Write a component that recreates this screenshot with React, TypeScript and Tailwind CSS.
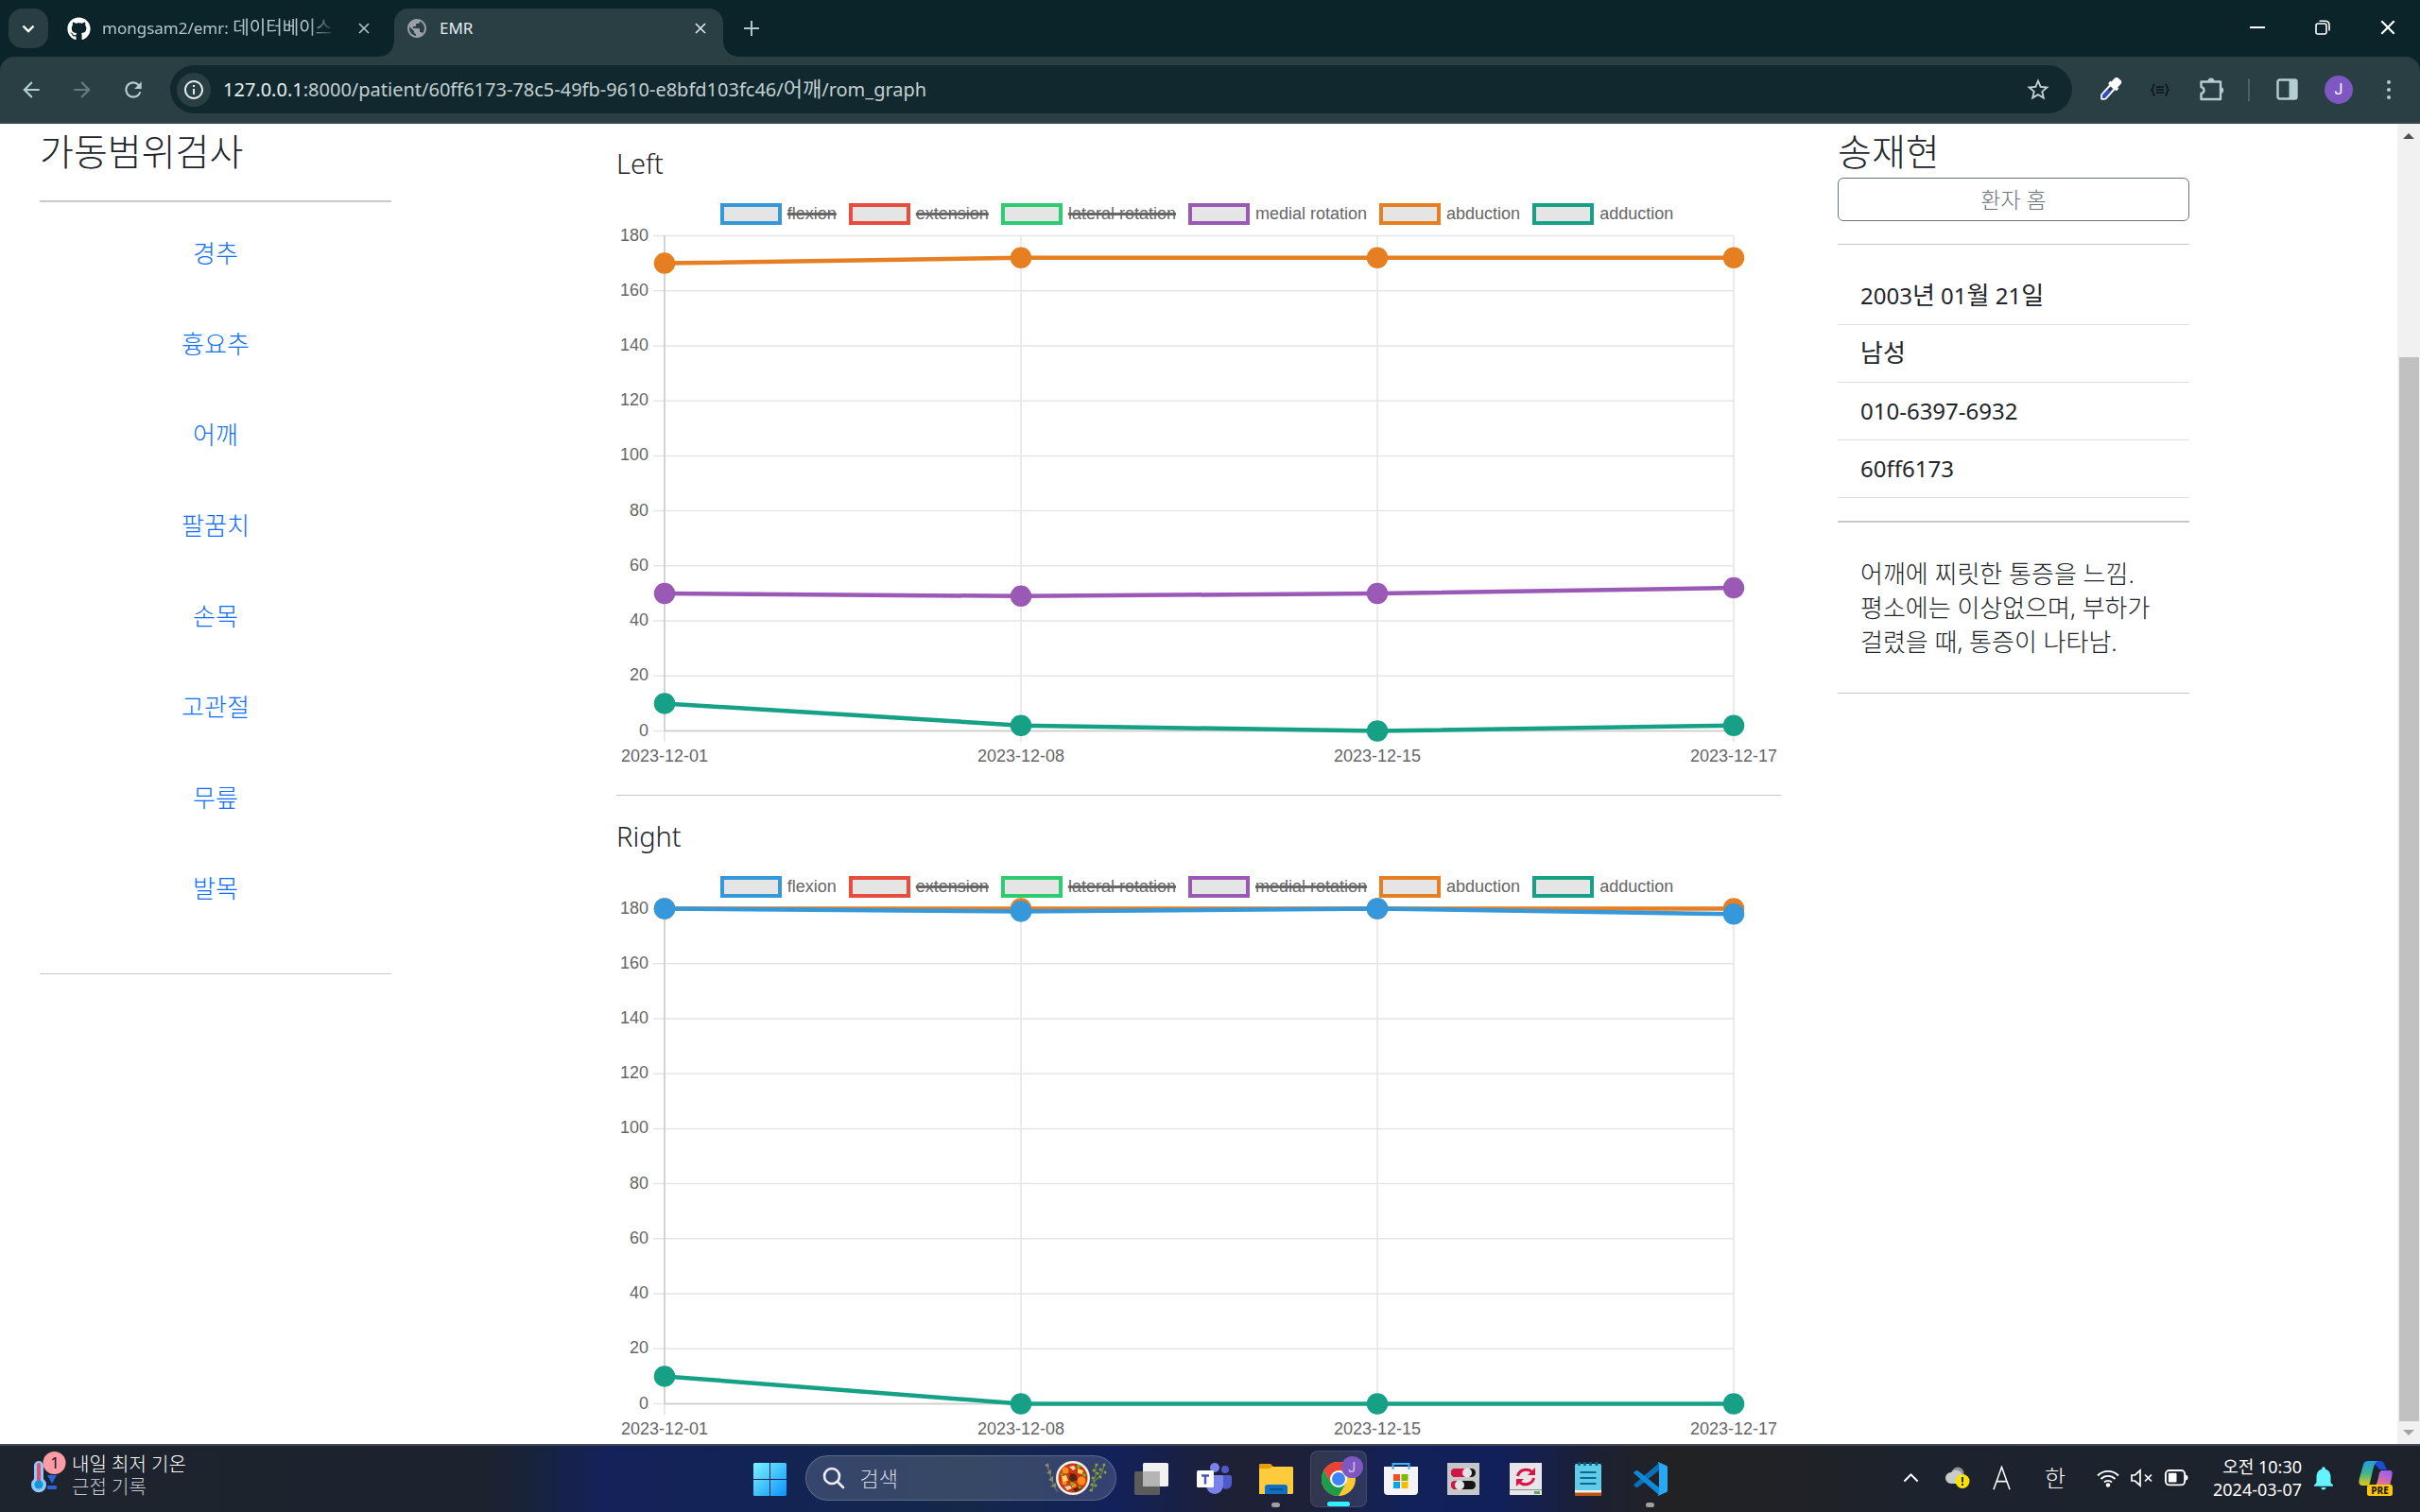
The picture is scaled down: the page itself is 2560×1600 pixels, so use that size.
import type { ReactNode } from "react";
import { FaGithub } from "react-icons/fa";
import { MdArrowBack, MdArrowForward, MdRefresh, MdStarBorder, MdInfoOutline, MdPublic, MdNotifications } from "react-icons/md";

const SANS = "font-['Noto_Sans','Noto_Sans_CJK_KR',sans-serif]";

/* ---------- data ---------- */

type Series = { label: string; color: string; box: string; hidden?: boolean; values: number[] };

const dates = ["2023-12-01", "2023-12-08", "2023-12-15", "2023-12-17"];

const leftSeries: Series[] = [
  { label: "flexion", color: "#3498db", box: "border-[#3498db]", hidden: true, values: [] },
  { label: "extension", color: "#e74c3c", box: "border-[#e74c3c]", hidden: true, values: [] },
  { label: "lateral rotation", color: "#2ecc71", box: "border-[#2ecc71]", hidden: true, values: [] },
  { label: "medial rotation", color: "#9b59b6", box: "border-[#9b59b6]", values: [50, 49, 50, 52] },
  { label: "abduction", color: "#e67e22", box: "border-[#e67e22]", values: [170, 172, 172, 172] },
  { label: "adduction", color: "#16a085", box: "border-[#16a085]", values: [10, 2, 0, 2] },
];

const rightSeries: Series[] = [
  { label: "flexion", color: "#3498db", box: "border-[#3498db]", values: [180, 179, 180, 178] },
  { label: "extension", color: "#e74c3c", box: "border-[#e74c3c]", hidden: true, values: [] },
  { label: "lateral rotation", color: "#2ecc71", box: "border-[#2ecc71]", hidden: true, values: [] },
  { label: "medial rotation", color: "#9b59b6", box: "border-[#9b59b6]", hidden: true, values: [] },
  { label: "abduction", color: "#e67e22", box: "border-[#e67e22]", values: [180, 180, 180, 180] },
  { label: "adduction", color: "#16a085", box: "border-[#16a085]", values: [10, 0, 0, 0] },
];

const joints = ["경추", "흉요추", "어깨", "팔꿈치", "손목", "고관절", "무릎", "발목"];
const patient = ["2003년 01월 21일", "남성", "010-6397-6932", "60ff6173"];

/* Hangul runs are set a little larger than the Latin text around them. */
function Mixed({ text }: { text: string }) {
  return (
    <>
      {text.split(/([가-힣]+)/).map((part, i) =>
        i % 2 ? (
          <span key={i} className="text-[26px] leading-none">
            {part}
          </span>
        ) : (
          part
        ),
      )}
    </>
  );
}

/* ---------- browser chrome ---------- */

function Cross({ className }: { className: string }) {
  return (
    <svg viewBox="0 0 12 12" className={className} fill="none" stroke="currentColor" strokeWidth="1.6">
      <path d="M1 1l10 10M11 1L1 11" />
    </svg>
  );
}

function TabStrip() {
  return (
    <div className="flex h-[60px] items-end bg-[#0b2429] text-[17px] text-[#b3c7cb]">
      <button aria-label="탭 검색" className="mb-[9px] ml-[9px] flex size-[42px] items-center justify-center rounded-[15px] bg-[#283e43] text-white">
        <svg viewBox="0 0 14 9" className="w-3.5" fill="none" stroke="currentColor" strokeWidth="2.4">
          <path d="M1.5 1.5L7 7l5.500-5.500" />
        </svg>
      </button>
      <div className="flex h-[51px] w-[366px] items-center pb-[9px] pl-5 pr-[26px]">
        <FaGithub className="size-[25px] shrink-0 text-white" />
        <span className="ml-3 w-[248px] overflow-hidden whitespace-nowrap [mask-image:linear-gradient(to_right,black_88%,transparent)]">
          mongsam2/emr: <span className="text-[19px] leading-none">데이터베이스</span>
        </span>
        <button aria-label="탭 닫기" className="ml-auto">
          <Cross className="size-3" />
        </button>
      </div>
      <div className="relative flex h-[51px] w-[348px] items-center rounded-t-[15px] bg-[#293f44] pb-[9px] pl-3 pr-[18px] text-[#e3eced]">
        <span className="absolute -left-[15px] bottom-0 size-[15px] bg-[radial-gradient(circle_at_0_0,transparent_14px,#293f44_15px)]" />
        <span className="absolute -right-[15px] bottom-0 size-[15px] bg-[radial-gradient(circle_at_100%_0,transparent_14px,#293f44_15px)]" />
        <MdPublic className="size-6 text-[#9aa0aa]" />
        <span className="ml-3">EMR</span>
        <button aria-label="탭 닫기" className="ml-auto">
          <Cross className="size-3" />
        </button>
      </div>
      <button aria-label="새 탭" className="mb-[22px] ml-[22px]">
        <svg viewBox="0 0 16 16" className="size-4" stroke="currentColor" strokeWidth="2">
          <path d="M8 0v16M0 8h16" />
        </svg>
      </button>
      <div className="mb-[23px] ml-auto mr-[26px] flex items-center gap-[53px] text-white">
        <button aria-label="최소화">
          <svg viewBox="0 0 16 16" className="size-4" stroke="currentColor" strokeWidth="2">
            <path d="M0 8h16" />
          </svg>
        </button>
        <button aria-label="복원">
          <svg viewBox="0 0 16 16" className="size-4" fill="none" stroke="currentColor" strokeWidth="1.6">
            <rect x="1" y="4" width="11" height="11" rx="2" />
            <path d="M4.500 1.200H11a4 4 0 0 1 4 4v6.300" />
          </svg>
        </button>
        <button aria-label="닫기">
          <Cross className="size-4" />
        </button>
      </div>
    </div>
  );
}

function Toolbar() {
  return (
    <div className="bg-[#0b2429]">
      <div className="flex h-[71px] items-center rounded-t-[15px] border-b-2 border-[#3b484b] bg-[#293f44] text-[#b3cdd2]">
        <button aria-label="뒤로" className="ml-5">
          <MdArrowBack className="size-[26px]" />
        </button>
        <button aria-label="앞으로" className="ml-7 text-[#667c82]">
          <MdArrowForward className="size-[26px]" />
        </button>
        <button aria-label="새로고침" className="ml-7">
          <MdRefresh className="size-[26px]" />
        </button>
        <div className="ml-[26px] flex h-[51px] flex-1 items-center rounded-full bg-[#11292e] pl-[7px] pr-[22px]">
          <span className="flex size-9 shrink-0 items-center justify-center rounded-full bg-[#293f44] text-[#e3eced]">
            <MdInfoOutline className="size-6" />
          </span>
          <span className="ml-[13px] whitespace-nowrap text-[20px] text-[#c3cfd1]">
            <span className="text-[#e8eff0]">127.0.0.1</span>:8000/patient/60ff6173-78c5-49fb-9610-e8bfd103fc46/
            <span className="text-[22px] leading-none">어깨</span>/rom_graph
          </span>
          <button aria-label="북마크" className="ml-auto">
            <MdStarBorder className="size-7 text-[#c3cfd1]" />
          </button>
        </div>
        <button aria-label="색상 추출" className="ml-[27px]">
          <svg viewBox="0 0 26 26" className="size-[26px]">
            <g transform="rotate(42 13 13)">
              <path d="M10 9h6v14l-3 3-3-3z" fill="#293f44" stroke="#fff" strokeWidth="2" strokeLinejoin="round" />
              <path d="M11 14h4v9l-2 2-2-2z" fill="#2f4fd0" />
              <rect x="8.500" y="-2" width="9" height="9" rx="3" fill="#fff" />
              <rect x="7" y="5.500" width="12" height="4" rx="1" fill="#fff" />
            </g>
          </svg>
        </button>
        <button aria-label="확장 프로그램 JSON" className="ml-[30px]">
          <svg viewBox="0 0 20 14" className="w-5" fill="none" stroke="#0c1518" strokeWidth="1.600">
            <path d="M4.500 1C2 1 3.500 6 1 7c2.500 1 1 6 3.500 6M15.500 1C18 1 16.500 6 19 7c-2.500 1-1 6-3.500 6M6 4h8M6 7h8M6 10h8" />
          </svg>
        </button>
        <button aria-label="확장 프로그램" className="ml-[31px]">
          <svg viewBox="0 0 27 27" className="size-[27px]" fill="none" stroke="currentColor" strokeWidth="2.400" strokeLinejoin="round">
            <path d="M23 11V5.500H2.500V11c4 1 4 6 0 7v6H23V11" />
            <path d="M9.500 5a3.500 3.500 0 0 1 7 0zM23 11.300a3.200 3.200 0 0 1 0 6.400z" fill="currentColor" stroke="none" />
          </svg>
        </button>
        <span className="ml-[25px] h-6 w-0.5 bg-[#4a6167]" />
        <button aria-label="측면 패널" className="ml-7">
          <svg viewBox="0 0 23 23" className="size-[23px]">
            <rect x="1.500" y="1.500" width="20" height="20" rx="2" fill="none" stroke="currentColor" strokeWidth="2.400" />
            <path d="M13.500 1h8v21h-8z" fill="currentColor" />
          </svg>
        </button>
        <button aria-label="프로필" className="ml-7 flex size-[30px] items-center justify-center rounded-full bg-[#7e57c2] font-[Roboto] text-base text-white">
          J
        </button>
        <button aria-label="메뉴" className="ml-[31px] mr-[27px] flex w-[13px] flex-col items-center gap-1">
          <span className="size-1 rounded-full bg-current" />
          <span className="size-1 rounded-full bg-current" />
          <span className="size-1 rounded-full bg-current" />
        </button>
      </div>
    </div>
  );
}

/* ---------- page ---------- */

const px = (i: number) => 51 + i * 377;
const py = (v: number) => 535.5 - (v / 180) * 524;

function RomChart({ title, series }: { title: string; series: Series[] }) {
  const ticks = [0, 20, 40, 60, 80, 100, 120, 140, 160, 180];
  return (
    <section>
      <h2 className="mb-[23px] text-[29px] font-light leading-9 text-[#212529]">{title}</h2>
      <div className="flex h-6 items-center justify-center gap-[13px] pr-1 font-['Liberation_Sans',sans-serif] text-lg leading-6 text-[#666]">
        {series.map((s) => (
          <button key={s.label} className="flex items-center gap-1.5">
            <span className={`h-[23px] w-[65px] border-4 bg-[#e5e5e5] ${s.box}`} />
            <span className={s.hidden ? "line-through decoration-[3px]" : ""}>{s.label}</span>
          </button>
        ))}
      </div>
      <svg viewBox="0 0 1232 576" className="block w-full overflow-visible font-['Liberation_Sans',sans-serif] text-lg" role="img" aria-label={title}>
        {ticks.map((t) => (
          <g key={t}>
            <path d={`M39 ${py(t)}H1182`} stroke="#e5e5e5" strokeWidth="1.500" />
            <text x="34" y={py(t) + 5} textAnchor="end" fill="#666">
              {t}
            </text>
          </g>
        ))}
        {dates.map((d, i) => (
          <g key={d}>
            <path d={`M${px(i)} 11V547`} stroke="#e5e5e5" strokeWidth="1.500" />
            <text x={px(i)} y="568" textAnchor="middle" fill="#666">
              {d}
            </text>
          </g>
        ))}
        <path d="M51 11V535.500H1182" fill="none" stroke="#cbcbcb" strokeWidth="1.500" />
        {[...series].reverse().filter((s) => !s.hidden).map((s) => (
          <g key={s.label} fill={s.color}>
            <polyline points={s.values.map((v, i) => `${px(i)},${py(v)}`).join(" ")} fill="none" stroke={s.color} strokeWidth="4.500" />
            {s.values.map((v, i) => (
              <circle key={i} cx={px(i)} cy={py(v)} r="11.250" />
            ))}
          </g>
        ))}
      </svg>
    </section>
  );
}

function Page() {
  return (
    <div className="flex min-h-0 flex-1 bg-white text-[#212529]">
      <div className="grid min-h-0 flex-1 grid-cols-[610fr_1304fr_622fr] overflow-hidden">
        <aside className="pl-[42px] pr-[196px] pt-[3px]">
          <h1 className="text-[39px] font-light leading-[52px]">가동범위검사</h1>
          <hr className="mt-[26px] border-t-2 border-[#c8c9ca]" />
          <nav className="mt-1.5 flex flex-col">
            {joints.map((j) => (
              <div key={j} className="flex h-24 items-center justify-center">
                <a href="#" className="text-[26px] font-light leading-9 text-[#0d6efd]">
                  {j}
                </a>
              </div>
            ))}
          </nav>
          <hr className="mt-[42px] border-[#c8c9ca]" />
        </aside>

        <main className="pl-[42px] pr-[30px] pt-6">
          <RomChart title="Left" series={leftSeries} />
          <hr className="mb-[25px] mt-[27px] border-[#c8c9ca]" />
          <RomChart title="Right" series={rightSeries} />
        </main>

        <aside className="pl-[30px] pr-[220px] pt-[3px]">
          <h1 className="text-[39px] font-light leading-[52px]">송재현</h1>
          <button className="mt-0.5 flex h-[46px] w-full items-center justify-center rounded-md border border-[#6c757d] text-[23px] font-light text-[#6c757d]">
            환자 홈
          </button>
          <hr className="my-6 border-[#c8c9ca]" />
          <ul>
            {patient.map((p) => (
              <li key={p} className="h-[61px] border-b border-[#dee2e6] px-6 py-3 text-[24px] leading-9">
                <Mixed text={p} />
              </li>
            ))}
          </ul>
          <hr className="my-6 border-t-2 border-[#c8c9ca]" />
          <p className="whitespace-nowrap px-6 py-3 text-[26px] font-light leading-9">
            어깨에 찌릿한 통증을 느낌.
            <br />
            평소에는 이상없으며, 부하가
            <br />
            걸렸을 때, 통증이 나타남.
          </p>
          <hr className="mt-6 border-[#c8c9ca]" />
        </aside>
      </div>

      <div className="flex w-6 flex-col items-center bg-[#f1f1f1]">
        <span className="mt-2.5 border-x-[6px] border-b-[6px] border-x-transparent border-b-[#505050]" />
        <span className="mt-[231px] w-[21px] flex-1 bg-[#c1c1c1]" />
        <span className="mb-[9px] mt-[9px] border-x-[6px] border-t-[6px] border-x-transparent border-t-[#a3a3a3]" />
      </div>
    </div>
  );
}

/* ---------- taskbar ---------- */

function Slot({ label, children, active, running }: { label: string; children: ReactNode; active?: boolean; running?: boolean }) {
  return (
    <button aria-label={label} className="flex h-[70px] w-[66px] items-center justify-center">
      <span className={`relative flex size-[60px] items-center justify-center rounded-lg ${active ? "border border-white/10 bg-white/10" : ""}`}>
        {children}
        {running && <span className="absolute bottom-0 h-[5px] w-[9px] rounded-full bg-[#a0a0a0]" />}
        {active && <span className="absolute bottom-0 h-[5px] w-6 rounded-full bg-[#2cf2ff]" />}
      </span>
    </button>
  );
}

function Stew() {
  return (
    <svg viewBox="0 0 68 38" className="w-[68px]">
      <g fill="none" stroke="#7d8a5c" strokeWidth="1.200">
        <path d="M3 4c4 10 5 20 12 30" stroke="#8a6a5a" />
        <path d="M64 4c-1 10-6 15-10 18-1 4-2 7-3 11M55 5v12l-3 6" stroke="#6f8f3c" />
      </g>
      <g fill="#7f9068">
        <path d="M1 6l4-3 1 5zM3 14l5-4v5zM5 21l5-4v6zM7 28l6-4v5z" />
      </g>
      <g fill="#86a83a">
        <circle cx="64" cy="5" r="1.500" /><circle cx="60" cy="10" r="1.500" /><circle cx="65" cy="13" r="1.500" /><circle cx="56" cy="5" r="1.500" />
        <circle cx="53" cy="11" r="1.500" /><circle cx="57" cy="14" r="1.500" /><circle cx="52" cy="19" r="1.500" /><circle cx="60" cy="18" r="1.500" />
        <circle cx="51" cy="26" r="1.500" /><circle cx="55" cy="27" r="1.500" /><circle cx="50" cy="32" r="1.500" />
      </g>
      <circle cx="31" cy="19" r="18" fill="#f3f0f0" />
      <circle cx="31" cy="19" r="15.500" fill="#c8390c" />
      <g fill="#ff8a1f">
        <circle cx="23" cy="11" r="3.500" /><circle cx="40" cy="22" r="4.500" /><circle cx="22" cy="24" r="2.500" /><circle cx="32" cy="27" r="2.500" />
      </g>
      <path d="M19 17l5-1 2 6-6 1zM36 9l6 2-1 4-5-1z" fill="#ffd166" />
      <path d="M28 14l6 1 2 6-6 2-3-3zM31 30l7-2 2 3-7 3z" fill="#5c2213" />
      <path d="M27 7l5-1 2 3-3 2zM22 28l6-1 2 3-5 2z" fill="#e6d3c0" />
      <g fill="#6ab81f">
        <circle cx="37" cy="7" r="2" /><circle cx="43" cy="16" r="1.800" /><circle cx="30" cy="25" r="2" /><circle cx="19" cy="15" r="1.500" /><circle cx="38" cy="29" r="1.500" />
      </g>
    </svg>
  );
}

function Taskbar() {
  return (
    <footer className="grid h-[72px] shrink-0 grid-cols-[1fr_auto_1fr] border-t-2 border-[#454a54] bg-[linear-gradient(90deg,#1d242e_0%,#1d232e_20%,#17233c_22%,#14215a_25%,#122355_31%,#14284a_40%,#12215a_46%,#1e2034_51%,#1c2038_54%,#12215a_58%,#12205a_62%,#1c2032_66%,#222224_69%,#1f2227_75%,#1c232e_80%,#1d222b_100%)]">
      <div className="flex items-center pl-8">
        <svg viewBox="0 0 38 44" className="mb-3 h-11 w-[38px] overflow-visible" aria-label="날씨">
          <path d="M4 14a5 5 0 0 1 10 0v14a8 8 0 1 1-10 0z" fill="#8fc9fb" />
          <path d="M7 13a2 2 0 0 1 4 0v17H7z" fill="#e4506a" />
          <circle cx="9" cy="34" r="4.500" fill="#1495dc" />
          <path d="M18 24h10l-5 9z" fill="#2a63e0" />
          <rect x="18" y="35" width="10" height="4" rx="1" fill="#2a63e0" />
          <circle cx="25.500" cy="11" r="12" fill="#ff9ba4" />
          <text x="26" y="17" textAnchor="middle" fontSize="17" fill="#1a1a1a">1</text>
        </svg>
        <div className="ml-1.5 pb-1.5 text-[20px] font-light leading-6 text-white">
          <p>내일 최저 기온</p>
          <p className="text-[#c6c8cb]">근접 기록</p>
        </div>
      </div>

      <div className="flex items-center">
        <Slot label="시작">
          <svg viewBox="0 0 35 35" className="size-[35px]">
            <defs>
              <linearGradient id="win" x1="0" y1="0" x2="1" y2="1">
                <stop offset="0" stopColor="#7cf3ff" />
                <stop offset="1" stopColor="#0a93fb" />
              </linearGradient>
            </defs>
            <path d="M1 0h16v17H0V1zM18 0h16l1 1v16H18zM0 18h17v17H1l-1-1zM18 18h17v16l-1 1H18z" fill="url(#win)" />
          </svg>
        </Slot>
        <label className="mx-1 mb-0.5 flex h-12 w-[329px] items-center rounded-full border border-white/20 bg-white/15 pl-[17px] pr-2">
          <svg viewBox="0 0 24 24" className="size-6 shrink-0" fill="none" stroke="#eceef4" strokeWidth="2.600">
            <circle cx="10" cy="10" r="8" />
            <path d="M16 16l6 6" strokeLinecap="round" />
          </svg>
          <input placeholder="검색" aria-label="검색" className="ml-4 w-0 flex-1 bg-transparent text-[22px] font-light text-white outline-none placeholder:text-[#d3d6e0]" />
          <Stew />
        </label>
        <Slot label="작업 보기">
          <svg viewBox="0 0 36 34" className="w-9">
            <rect x="9" y="0" width="27" height="25" rx="1.500" fill="#f1f1f1" />
            <rect x="0" y="9" width="27" height="25" rx="1.500" fill="#5b5b5b" />
            <path d="M9 9h18v16H9z" fill="#b5b5b5" />
          </svg>
        </Slot>
        <Slot label="Teams">
          <svg viewBox="0 0 38 34" className="w-[38px]">
            <circle cx="31" cy="7" r="4" fill="#5059c9" />
            <path d="M26 13h10a2 2 0 0 1 2 2v7a6 6 0 0 1-9 5z" fill="#5059c9" />
            <circle cx="20" cy="5" r="5" fill="#7b83eb" />
            <path d="M12 13h15a2 2 0 0 1 2 2v9a9 9 0 0 1-18 0V14z" fill="#7b83eb" />
            <rect x="1" y="8" width="18" height="18" rx="1.500" fill="#fff" />
            <path d="M6 13.500h8M10 13.500v9" stroke="#4b53bc" strokeWidth="2.400" />
          </svg>
        </Slot>
        <Slot label="파일 탐색기" running>
          <svg viewBox="0 0 36 34" className="w-9">
            <path d="M0 2a1 1 0 0 1 1-1h11l3 3v4H0z" fill="#e3a008" />
            <path d="M0 6h11l3-2h21l1 1v27l-1 1H0z" fill="#fdcb3c" />
            <path d="M6 33v-7a3 3 0 0 1 3-3h18a3 3 0 0 1 3 3v7z" fill="#0f6fc0" />
            <path d="M11 28h14" stroke="#0a4a88" strokeWidth="1.600" />
          </svg>
        </Slot>
        <Slot label="Chrome" active>
          <svg viewBox="-18 -18 36 36" className="size-9">
            <circle r="18" fill="#fcc934" />
            <path d="M0-9H15.600A18 18 0 0 0 -15.600 -9L-7.800 4.500z" fill="#ea4335" />
            <path d="M-15.600-9A18 18 0 0 0 0 18L7.800 4.500-7.800 4.500z" fill="#1e9c4a" />
            <circle r="9" fill="#fff" />
            <circle r="7" fill="#3f83f8" />
          </svg>
          <span className="absolute right-[3px] top-[5px] flex size-[23px] items-center justify-center rounded-full bg-[#7e57c2] font-[Roboto] text-sm text-[#d9ccee]">J</span>
        </Slot>
        <Slot label="Microsoft Store">
          <svg viewBox="0 0 36 36" className="size-9">
            <path d="M9.500 7V2h17v5" fill="none" stroke="#39b7f0" strokeWidth="2" />
            <path d="M0 5h36v26a4 4 0 0 1-4 4H4a4 4 0 0 1-4-4z" fill="#f4f4f6" />
            <path d="M9.500 5v3M26.500 5v3" stroke="#39b7f0" strokeWidth="2" />
            <path d="M10 13h7v7h-7z" fill="#f25022" />
            <path d="M18.500 13h7v7h-7z" fill="#7fba00" />
            <path d="M10 21h7v7h-7z" fill="#00a4ef" />
            <path d="M18.500 21h7v7h-7z" fill="#ffb900" />
          </svg>
        </Slot>
        <Slot label="설정 관리자">
          <svg viewBox="0 0 34 34" className="size-[34px]">
            <path d="M0 0h34v34H0z" fill="#c4c6c8" />
            <rect x="4" y="6" width="26" height="9" rx="4.500" fill="#151515" />
            <path d="M8.500 6H21v9H8.500a4.500 4.500 0 0 1 0-9z" fill="#d8134a" />
            <circle cx="21" cy="10.500" r="5" fill="#e3e3e3" />
            <rect x="4" y="19" width="26" height="9" rx="4.500" fill="#151515" />
            <path d="M8.500 19H12v9H8.500a4.500 4.500 0 0 1 0-9z" fill="#d8134a" />
            <circle cx="13" cy="23.500" r="5" fill="#e3e3e3" />
          </svg>
        </Slot>
        <Slot label="업데이트">
          <svg viewBox="0 0 34 34" className="size-[34px]">
            <path d="M0 0h34v34H0z" fill="#e6e6e8" />
            <path d="M0 28.500h34" stroke="#8d8d8d" />
            <path d="M26 30h6v3h-6z" fill="#4fae4f" />
            <g fill="none" stroke="#d8134a" strokeWidth="3">
              <path d="M8.500 14a9 8.500 0 0 1 15.500-4M25.500 16a9 8.500 0 0 1-15.500 4" />
            </g>
            <path d="M27 5v8h-8zM7 25v-8h8z" fill="#d8134a" />
          </svg>
        </Slot>
        <Slot label="메모장">
          <svg viewBox="0 0 28 36" className="h-9">
            <path d="M0 30h28v4a1 1 0 0 1-1 2H1a1 1 0 0 1-1-2z" fill="#b8560f" />
            <path d="M0 28h28v4.500H0z" fill="#f5f0ea" />
            <rect y="2" width="28" height="28" rx="1.500" fill="#62cbe8" />
            <path d="M5.500 11h17M5.500 17h17M5.500 23h17" stroke="#0b6a94" strokeWidth="2" />
            <path d="M4.500 0v4M10.500 0v4M16.500 0v4M23 0v4" stroke="#0c5f86" strokeWidth="2.600" />
          </svg>
        </Slot>
        <Slot label="Visual Studio Code" running>
          <svg viewBox="0 0 36 36" className="size-9">
            <path d="M2 26.500c1 .8 2 .8 3 0L27 9V1L.800 23.500c-.8 1-.6 1.500 0 2z" fill="#0b6fb5" />
            <path d="M2 9.500c1-.8 2-.8 3 0L27 27v8L.800 12.500c-.8-1-.6-1.500 0-2z" fill="#0f8ad8" />
            <path d="M26 0l9 4a2 2 0 0 1 1 1.500v25a2 2 0 0 1-1 1.500l-9 4c-1 0 1-1 1-2.500v-31C27 1.500 25 .500 26 0z" fill="#27a9f2" />
          </svg>
        </Slot>
      </div>

      <div className="flex items-center justify-end pb-0.5 text-white">
        <svg viewBox="0 0 18 12" className="w-[17px]" fill="none" stroke="currentColor" strokeWidth="2.200">
          <path d="M1.500 10L9 2.500 16.500 10" />
        </svg>
        <svg viewBox="0 0 26 24" className="ml-7 w-[26px]">
          <circle cx="13" cy="7" r="6.500" fill="#8f9296" />
          <path d="M6 18a6 6 0 0 1 0-12 7 7 0 0 1 12 3v9z" fill="#c9cbcd" />
          <circle cx="18" cy="15.500" r="7.500" fill="#ffe100" />
          <path d="M18 11v5.500M18 18v2" stroke="#222" strokeWidth="2" />
        </svg>
        <svg viewBox="0 0 20 27" className="ml-6 w-[19px]" fill="none" stroke="currentColor" strokeWidth="1.600" aria-label="영문 입력">
          <path d="M1 26.500L10 1.500l9 25M4.500 17.500h11" />
        </svg>
        <span className="ml-9 text-2xl font-light leading-8">한</span>
        <svg viewBox="0 0 24 20" className="ml-[33px] w-6" fill="none" stroke="currentColor" strokeWidth="1.900">
          <path d="M1 7.500a15.500 15.500 0 0 1 22 0M4.500 11a10.500 10.500 0 0 1 15 0M8 14.500a5.700 5.700 0 0 1 8 0" />
          <circle cx="12" cy="17.500" r="2.200" fill="currentColor" stroke="none" />
        </svg>
        <svg viewBox="0 0 24 20" className="ml-3 w-6" fill="none" stroke="currentColor" strokeWidth="1.700">
          <path d="M1 7h3.500L10 2v16l-5.500-5H1zM15 6.500l7 7M22 6.500l-7 7" />
        </svg>
        <svg viewBox="0 0 26 18" className="ml-3 w-[25px]">
          <rect x="1" y="1" width="21" height="16" rx="4" fill="none" stroke="currentColor" strokeWidth="2" />
          <rect x="4" y="4" width="9" height="10" rx="1" fill="currentColor" />
          <path d="M23 6.500a2 2 0 0 1 2 2v1a2 2 0 0 1-2 2z" fill="currentColor" stroke="currentColor" />
        </svg>
        <div className="ml-[26px] text-right text-lg leading-6">
          <p>오전 10:30</p>
          <p>2024-03-07</p>
        </div>
        <MdNotifications className="ml-2 size-[30px] text-[#63f5ff]" />
        <svg viewBox="0 0 36 38" className="ml-[22px] mr-[29px] w-9" aria-label="Copilot">
          <defs>
            <linearGradient id="cpa" x1="0" y1="0" x2="0" y2="1">
              <stop offset="0" stopColor="#1f9de8" />
              <stop offset=".5" stopColor="#3fb58a" />
              <stop offset="1" stopColor="#e8c51c" />
            </linearGradient>
            <linearGradient id="cpb" x1="0.500" y1="0" x2="0" y2="1">
              <stop offset="0" stopColor="#a060ee" />
              <stop offset="1" stopColor="#ff7a6a" />
            </linearGradient>
          </defs>
          <path d="M10 1h13c3 0 4 2 5 5l2 4h-8l-4-5z" fill="#1a4fd0" />
          <path d="M10 1h10c-3 2-4 6-5 10l-3 13c-1 3-2 3-5 3H4c-4 0-4-4-3-8L5 5c1-3 2-4 5-4z" fill="url(#cpa)" />
          <path d="M25 11h8c3 0 3 3 2.500 5L33 28H17c2-2 3-5 4-10 1-5 2-7 4-7z" fill="url(#cpb)" />
          <rect x="9" y="26" width="27" height="12" rx="2.500" fill="#ffc800" />
          <text x="22.500" y="36" textAnchor="middle" fontSize="10" fontWeight="800" fill="#1b1b1b">PRE</text>
        </svg>
      </div>
    </footer>
  );
}

export default function App() {
  return (
    <div className={`flex h-screen flex-col overflow-hidden ${SANS}`}>
      <TabStrip />
      <Toolbar />
      <Page />
      <Taskbar />
    </div>
  );
}
